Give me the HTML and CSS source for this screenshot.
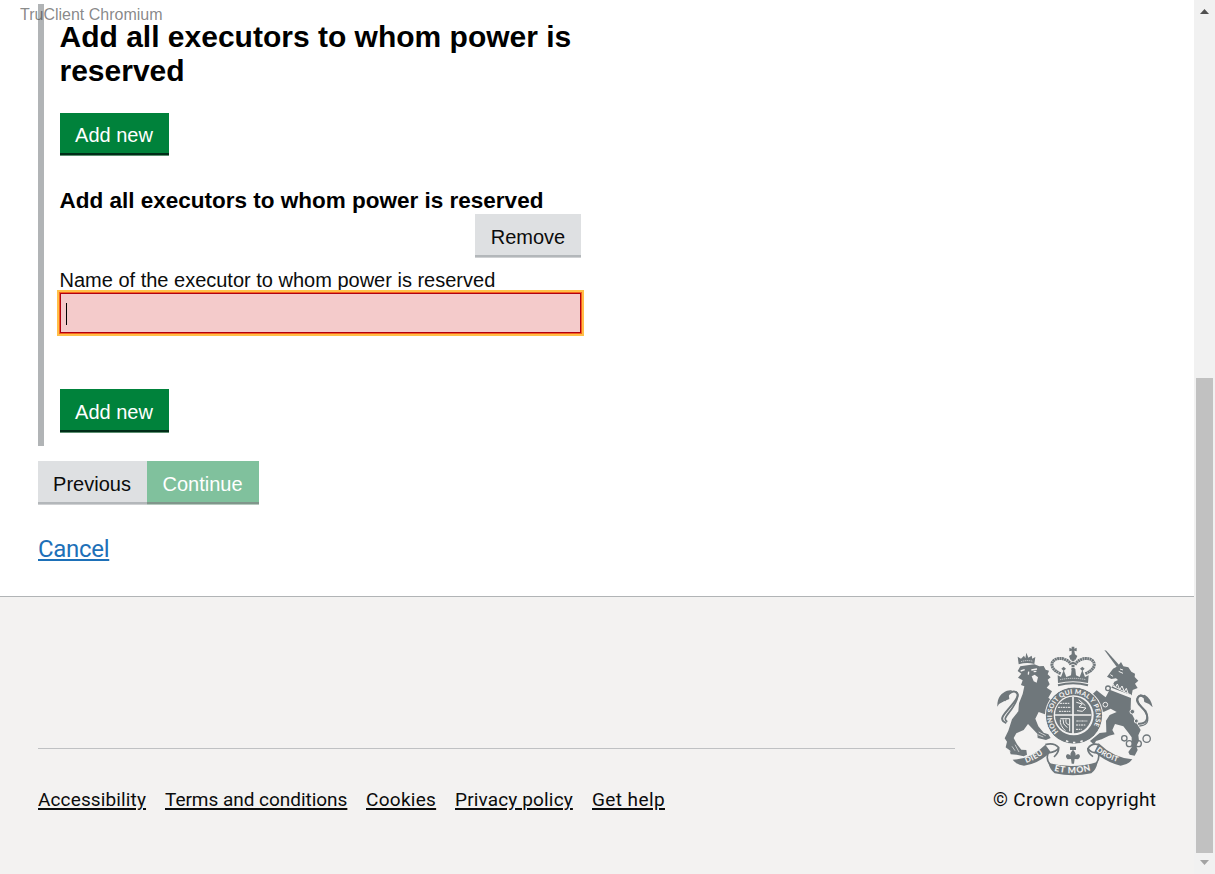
FILE: index.html
```html
<!DOCTYPE html>
<html lang="en">
<head>
<meta charset="utf-8">
<title>Executors</title>
<link rel="stylesheet" href="styles.css">
</head>
<body>
<div class="window">
<div class="page">
  <div class="watermark">TruClient Chromium</div>
  <main class="main">
    <section class="panel">
      <h1 class="title">Add all executors to whom power is reserved</h1>
      <button class="btn btn-green btn-first">Add new</button>
      <h2 class="subtitle">Add all executors to whom power is reserved</h2>
      <div class="remove-row"><button class="btn btn-grey btn-remove">Remove</button></div>
      <div class="label">Name of the executor to whom power is reserved</div>
      <div class="field"><span class="caret"></span></div>
      <button class="btn btn-green btn-last">Add new</button>
    </section>
    <div class="actions">
      <button class="btn btn-grey btn-prev">Previous</button><button class="btn btn-green btn-disabled">Continue</button>
    </div>
    <a class="cancel">Cancel</a>
  </main>
  <footer class="footer">
    <div class="footer-main">
      <div class="rule"></div>
      <nav class="links">
        <a class="l1">Accessibility</a><a class="l2">Terms and conditions</a><a class="l3">Cookies</a><a class="l4">Privacy policy</a><a class="l5">Get help</a>
      </nav>
    </div>
    <div class="crown">
      <svg class="crest" width="180" height="144" viewBox="0 0 540 432">
        <defs>
          <path id="arcTop" d="M221 290 A66 66 0 1 1 313 290"/>
          <path id="arcDieu" d="M124 384 Q160 372 194 341"/>
          <path id="arcDroit" d="M333 347 Q368 376 420 386"/>
          <path id="arcMon" d="M207 407 Q265 424 328 403"/>
        </defs>
        <g class="ink">
          <!-- lion -->
          <path d="M101 88 L98 65 L108 71 L117 62 L121 70 L124 53 L130 68 L140 62 L142 71 L151 66 L148 87 Q126 80 101 88Z"/>
          <path d="M106 94 L148 88 L163 94 L176 93 L182 104 L192 107 L188 118 L197 127 L188 134 L194 148 L185 158 L201 169 L190 188 L207 201 L202 221 L184 239 L161 231 L151 251 L160 274 L176 293 L190 298 L197 309 L183 315 L158 309 L157 296 L129 267 L116 285 L94 295 L86 309 L96 328 L109 344 L124 345 L126 359 L116 364 L95 359 L77 358 L74 347 L62 337 L66 320 L59 310 L70 287 L81 253 L100 229 L102 205 L113 177 L118 154 L108 150 L113 136 L99 128 L109 116 L98 108Z"/>
          <path d="M187 215 L201 228 L199 244 L185 239 L176 230Z"/>
          <!-- unicorn -->
          <path d="M358 45 L364 47 L403 91 L396 97Z"/>
          <path d="M398 94 L408 81 L415 94 L430 97 L439 110 L450 116 L449 126 L460 137 L450 146 L458 159 L443 165 L440 181 L379 158 L388 140 L399 135 L393 130 L379 132 L366 125 L374 115 L384 101Z"/>
          <path d="M374 164 L438 189 L437 220 L442 239 L455 265 L467 285 L460 301 L462 317 L454 333 L458 345 L449 362 L434 359 L430 351 L440 337 L440 307 L429 292 L415 274 L390 267 L382 285 L389 298 L372 302 L350 313 L333 318 L327 329 L315 318 L344 294 L364 292 L363 257 L374 240 L395 231 L377 221 L357 230 L337 232 L335 219 L344 211 L340 195 L323 177 L335 166 L350 178 L362 187Z"/>
          <!-- crown -->
          <path d="M253 38 L260 41 L260 35 L268 35 L268 41 L275 38 L275 49 L268 47 L270 58 L277 63 L272 74 L256 74 L252 63 L260 58 L260 47 L253 49Z"/>
          <path d="M218 121 L228 126 L236 105 L244 126 L258 121 L260 102 L264 98 L271 102 L273 121 L284 126 L292 105 L300 126 L311 121 L309 144 Q264 133 219 144Z"/>
          <path d="M229 101 L236 95 L243 101 L236 108Z M285 101 L292 95 L299 101 L292 108Z"/>
          <!-- fleur below the shield -->
          <path d="M255 335 H273 V345 H255Z M264 344 Q276 355 270 368 Q272 355 282 358 Q289 366 279 373 L269 372 L267 386 H260 L258 372 L248 373 Q239 366 246 358 Q256 355 258 368 Q252 355 264 344Z"/>
          <!-- ribbon -->
          <path d="M83 374 Q139 372 181 329 L197 351 Q160 387 117 392 Q95 390 83 374Z"/>
          <path d="M341 325 Q386 369 442 373 Q431 389 407 392 Q366 383 328 351Z"/>
          <path d="M190 384 Q264 403 338 381 Q334 404 319 415 Q264 427 209 415 Q195 404 190 384Z"/>
        </g>
        <g class="line">
          <path d="M227 116 C179 96 205 60 239 73 Q252 77 258 89 M301 116 C350 96 323 60 290 73 Q277 77 270 89" stroke-width="9" stroke-dasharray="6 1.2"/>
          <path d="M264 72 V105" stroke-width="9" stroke-dasharray="7 2"/>
          <path d="M219 151 Q264 139 309 151" stroke-width="6"/>
          <path d="M64 264 C40 255 55 240 72 220 C95 194 106 177 92 171 C81 164 64 181 58 198" stroke-width="6"/>
          <path d="M67 260 C50 252 72 236 84 216 C100 191 102 174 92 171" stroke-width="5"/>
          <path d="M459 266 C484 268 493 251 482 229 L461 207 C449 191 462 177 476 184" stroke-width="6"/>
          <path d="M463 273 C496 271 492 247 477 225 C457 204 450 185 469 180" stroke-width="4"/>
          <circle cx="418" cy="310" r="8" stroke-width="4"/><circle cx="433" cy="326" r="9" stroke-width="4"/><circle cx="460" cy="326" r="9" stroke-width="4"/><circle cx="485" cy="311" r="11" stroke-width="4"/><circle cx="369" cy="160" r="7" stroke-width="4"/>
          <path d="M181 329 Q207 322 221 338 Q216 350 190 354 Q181 372 196 389 M221 338 Q222 352 207 366 M341 329 Q320 323 309 340 Q316 354 340 354 Q345 371 333 386 M309 340 Q306 351 324 365" stroke-width="5"/>
        </g>
        <path class="ink" d="M37 215 C36 189 48 174 66 167 L81 165 L71 178 L73 192 L57 199 L42 207Z M503 217 L492 207 L478 201 L476 190 L467 184 L479 179 Q499 191 503 217Z"/>
        <circle class="ink" cx="267" cy="242" r="85"/>
        <circle class="paperline" cx="267" cy="242" r="86" stroke-width="3"/>
        <circle class="paper" cx="266" cy="241" r="60"/>
        <circle class="ink" cx="265" cy="240" r="55"/>
        <g class="paperline">
          <path d="M264 186 V300 M210 240 H319" stroke-width="5"/>
          <path d="M224 205 H255 M219 217 H257 M222 229 H256 M274 258 H307 M273 270 H303 M273 283 H290" stroke-width="3" stroke-dasharray="7 2 4 2"/>
          <path d="M274 202 L292 207 L282 216 L303 219 L292 229 L276 227 M281 194 L301 212 M226 254 Q224 272 241 287 M234 253 Q232 268 247 278 M243 253 Q240 266 252 270 M226 251 H254 V289" stroke-width="3"/>
          <path d="M107 108 L119 104 M139 105 L156 102 M131 110 L130 119 M146 110 L154 109" stroke-width="4"/>
          <path d="M381 152 L438 180 M384 147 L391 158 L397 147 L404 164 L411 153 L418 170 L424 160 L429 175" stroke-width="3"/>
          <path d="M401 109 L414 115 M405 102 L414 105 M376 119 L384 124" stroke-width="3"/>
          <path d="M108 80 Q127 74 144 79 M225 134 Q264 126 303 134" stroke-width="2" stroke-dasharray="4 2"/>
          <path d="M67 342 L77 349 M81 334 L90 347 M90 329 L102 351 M158 299 L175 306 M161 291 L182 302" stroke-width="2"/>
          <path d="M243 317 L250 320 M264 323 L271 323 M286 320 L293 317" stroke-width="5"/>
        </g>
        <path class="paper" d="M140 124 L149 119 L159 127 L155 143 L146 139Z"/>
        <g class="ring"><circle cx="442" cy="230" r="7"/><circle cx="454" cy="258" r="6"/><circle cx="361" cy="209" r="7"/></g>
        <g class="motto">
          <text font-size="20" letter-spacing=".6"><textPath href="#arcTop">HONI SOIT QUI MAL Y PENSE</textPath></text>
          <text font-size="23" letter-spacing="1"><textPath href="#arcDieu">DIEU</textPath></text>
          <text font-size="22" letter-spacing="1"><textPath href="#arcDroit">DROIT</textPath></text>
          <text font-size="26" letter-spacing="2"><textPath href="#arcMon">ET MON</textPath></text>
        </g>
      </svg>
      <span class="copyright">© Crown copyright</span>
    </div>
  </footer>
</div>
<div class="scrollbar">
  <svg width="21" height="21"><path d="M6 14 L10.5 9 L15 14Z" fill="#505050"/></svg>
  <div class="thumb"></div>
  <svg width="21" height="21"><path d="M6 7 L10.5 12 L15 7Z" fill="#a3a3a3"/></svg>
</div>
</div>
</body>
</html>
```
FILE: styles.css
```css
* { box-sizing: border-box; }
body { margin: 0; background: #fff; color: #0b0c0c; font-family: "Liberation Sans", Arial, sans-serif; font-size: 20px; overflow: hidden; }
.window { display: flex; width: 1215px; height: 874px; }
.page { position: relative; width: 1194px; display: flex; flex-direction: column; }
.watermark { position: absolute; left: 20px; top: 5px; font-size: 16px; line-height: 19px; color: rgba(70, 70, 70, .65); }
.main { height: 596px; padding: 4px 0 0 38px; }
.panel { width: 543px; height: 442px; border-left: 6px solid #b1b4b6; padding: 16px 0 0 16px; }
.title { margin: 0 0 25px -0.5px; font-size: 30px; line-height: 34px; color: #000; }
.btn { display: block; height: 44px; padding: 2px 1px 0 0; border: 0; font: 20px/39px "Liberation Sans", Arial, sans-serif; text-align: center; }
.btn-green { width: 109px; color: #fff; background: #00823b; box-shadow: inset 0 -1px #5c8f70, inset 0 -3px #002d18; }
.btn-first { height: 43px; line-height: 38px; padding-top: 0; }
.btn-grey { width: 106px; color: #0b0c0c; background: #dee0e2; box-shadow: inset 0 -1px #cfd1d3, inset 0 -3px #b3b7ba; }
.btn-remove { padding-right: 0; }
.btn-prev { width: 109px; }
.btn-disabled { width: 112px; background: #80c19d; box-shadow: inset 0 -1px #b5c9be, inset 0 -3px #80968b; }
.subtitle { margin: 32px 0 0 -0.5px; font-size: 22.5px; line-height: 26px; color: #000; white-space: nowrap; }
.remove-row { display: flex; justify-content: flex-end; }
.label { margin: 10px 0 0 -0.5px; height: 24px; line-height: 24px; white-space: nowrap; }
.field { width: 523px; height: 42px; margin-left: -1px; border: 1px solid #f4601f; outline: 2px solid #ffbf47; box-shadow: inset 0 0 0 1px #b10010; background: #f4cbcb; padding: 10px 0 0 6px; }
.caret { display: block; width: 1px; height: 22px; background: #000; }
.btn-last { margin-top: 55px; }
.actions { display: flex; margin-top: 15px; }
.cancel { display: inline-block; margin-top: 29px; font: 24px/30px Roboto, sans-serif; letter-spacing: -.3px; color: #1d70b8; text-decoration: underline; text-decoration-thickness: 2px; text-underline-offset: 2px; }
.footer { flex: 1; display: flex; background: #f3f2f1; border-top: 1px solid #b1b4b6; padding-left: 38px; font: 19px/24px Roboto, sans-serif; }
.footer-main { width: 917px; padding-top: 151px; }
.rule { height: 1px; background: #bfc1c3; }
.links { display: flex; margin-top: 39px; gap: 19px; }
.links a { white-space: nowrap; text-decoration: underline; text-decoration-thickness: 2px; text-underline-offset: 2px; }
.l1 { width: 108px; letter-spacing: .13px; }
.l2 { width: 182px; letter-spacing: -.03px; }
.l3 { width: 70px; letter-spacing: .28px; }
.l4 { width: 118px; letter-spacing: .15px; }
.l5 { letter-spacing: .4px; }
.crown { width: 180px; margin-left: 30px; padding-top: 38px; }
.crest { display: block; }
.copyright { display: block; margin: 9px 0 0 8px; white-space: nowrap; letter-spacing: .35px; }
.ink { fill: #6f777b; }
.paper { fill: #f3f2f1; }
.line { fill: none; stroke: #6f777b; }
.paperline { fill: none; stroke: #f3f2f1; }
.ring { fill: #6f777b; stroke: #f3f2f1; stroke-width: 3; }
.motto { fill: #f3f2f1; font-family: Lato, sans-serif; font-weight: 900; }
.scrollbar { width: 21px; height: 874px; background: #f1f1f1; display: flex; flex-direction: column; }
.thumb { width: 17px; height: 475px; margin: 357px 0 0 2px; background: #c1c1c1; }
.scrollbar svg { flex: none; }
```
